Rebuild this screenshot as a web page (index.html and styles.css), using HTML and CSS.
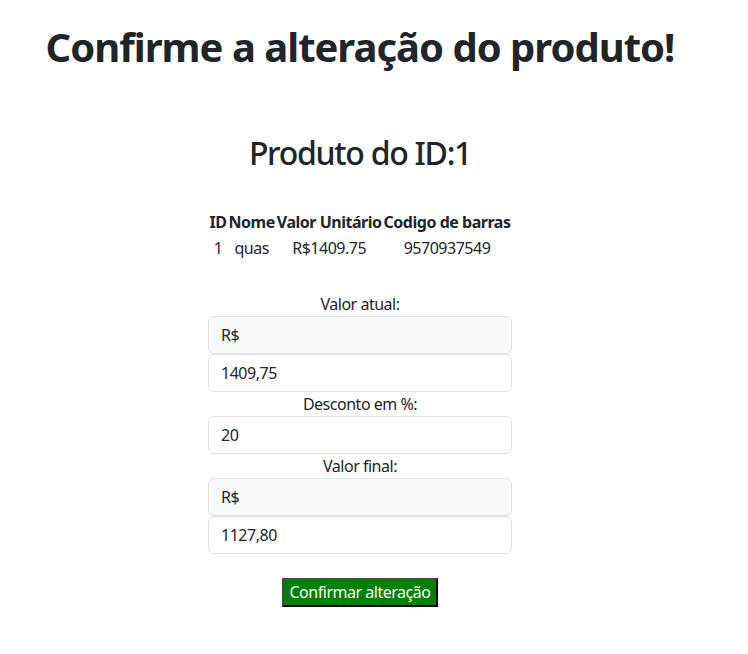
FILE: index.html
```html
<!DOCTYPE html>
<html lang="pt-BR">
<head>
<meta charset="utf-8">
<title>Confirmar alteração</title>
<link rel="stylesheet" href="styles.css">
</head>
<body>
<div class="page">
  <h1 class="title">Confirme a alteração do produto!</h1>
  <h2 class="subtitle">Produto do ID:1</h2>
  <table class="product">
    <thead>
      <tr><th>ID</th><th>Nome</th><th>Valor Unitário</th><th>Codigo de barras</th></tr>
    </thead>
    <tbody>
      <tr><td>1</td><td>quas</td><td>R$1409.75</td><td>9570937549</td></tr>
    </tbody>
  </table>
  <form class="form">
    <label class="label">Valor atual:</label>
    <div class="group">
      <span class="addon">R$</span>
      <input class="field" type="text" value="1409,75">
    </div>
    <label class="label">Desconto em %:</label>
    <input class="field" type="text" value="20">
    <label class="label">Valor final:</label>
    <div class="group">
      <span class="addon">R$</span>
      <input class="field" type="text" value="1127,80">
    </div>
    <button class="confirm" type="button">Confirmar alteração</button>
  </form>
</div>
</body>
</html>
```
FILE: styles.css
```css
html, body {
  margin: 0;
  padding: 0;
  background: #fff;
}
body {
  font-family: "Noto Sans", "Open Sans", sans-serif;
  font-size: 16px;
  line-height: 24px;
  color: #212529;
  letter-spacing: -0.03em;
}
.page {
  width: 720px;
  display: flex;
  flex-direction: column;
  align-items: center;
}
.title {
  margin: 23px 0 0;
  font-size: 40px;
  line-height: 48px;
  font-weight: 700;
  letter-spacing: -0.025em;
}
.subtitle {
  margin: 63px 0 0;
  font-size: 32px;
  line-height: 38px;
  font-weight: 500;
  letter-spacing: -0.04em;
}
.product {
  margin-top: 37px;
  border-collapse: collapse;
}
.product th, .product td {
  padding: 1px;
  text-align: center;
  line-height: 24px;
}
.product th {
  font-weight: 700;
}
.form {
  margin-top: 31px;
  width: 304px;
  display: flex;
  flex-direction: column;
  align-items: stretch;
}
.label {
  text-align: center;
  line-height: 24px;
}
.group {
  display: flex;
  flex-direction: column;
}
.addon, .field {
  box-sizing: border-box;
  height: 38px;
  padding: 6px 12px;
  border: 1px solid #dee2e6;
  border-radius: 6px;
  font-family: inherit;
  font-size: 16px;
  line-height: 24px;
  letter-spacing: -0.03em;
  color: #212529;
  background: #fff;
  width: 100%;
  display: block;
}
.addon {
  background: #f8f9fa;
}
.confirm {
  align-self: center;
  margin-top: 24px;
  width: 156px;
  height: 29px;
  padding: 0;
  white-space: nowrap;
  font-family: inherit;
  font-size: 16px;
  line-height: 23px;
  letter-spacing: -0.03em;
  color: #fff;
  background: #008000;
  border-width: 2px;
  border-style: solid;
  border-color: #4a4a4a #000 #000 #4a4a4a;
}
```
